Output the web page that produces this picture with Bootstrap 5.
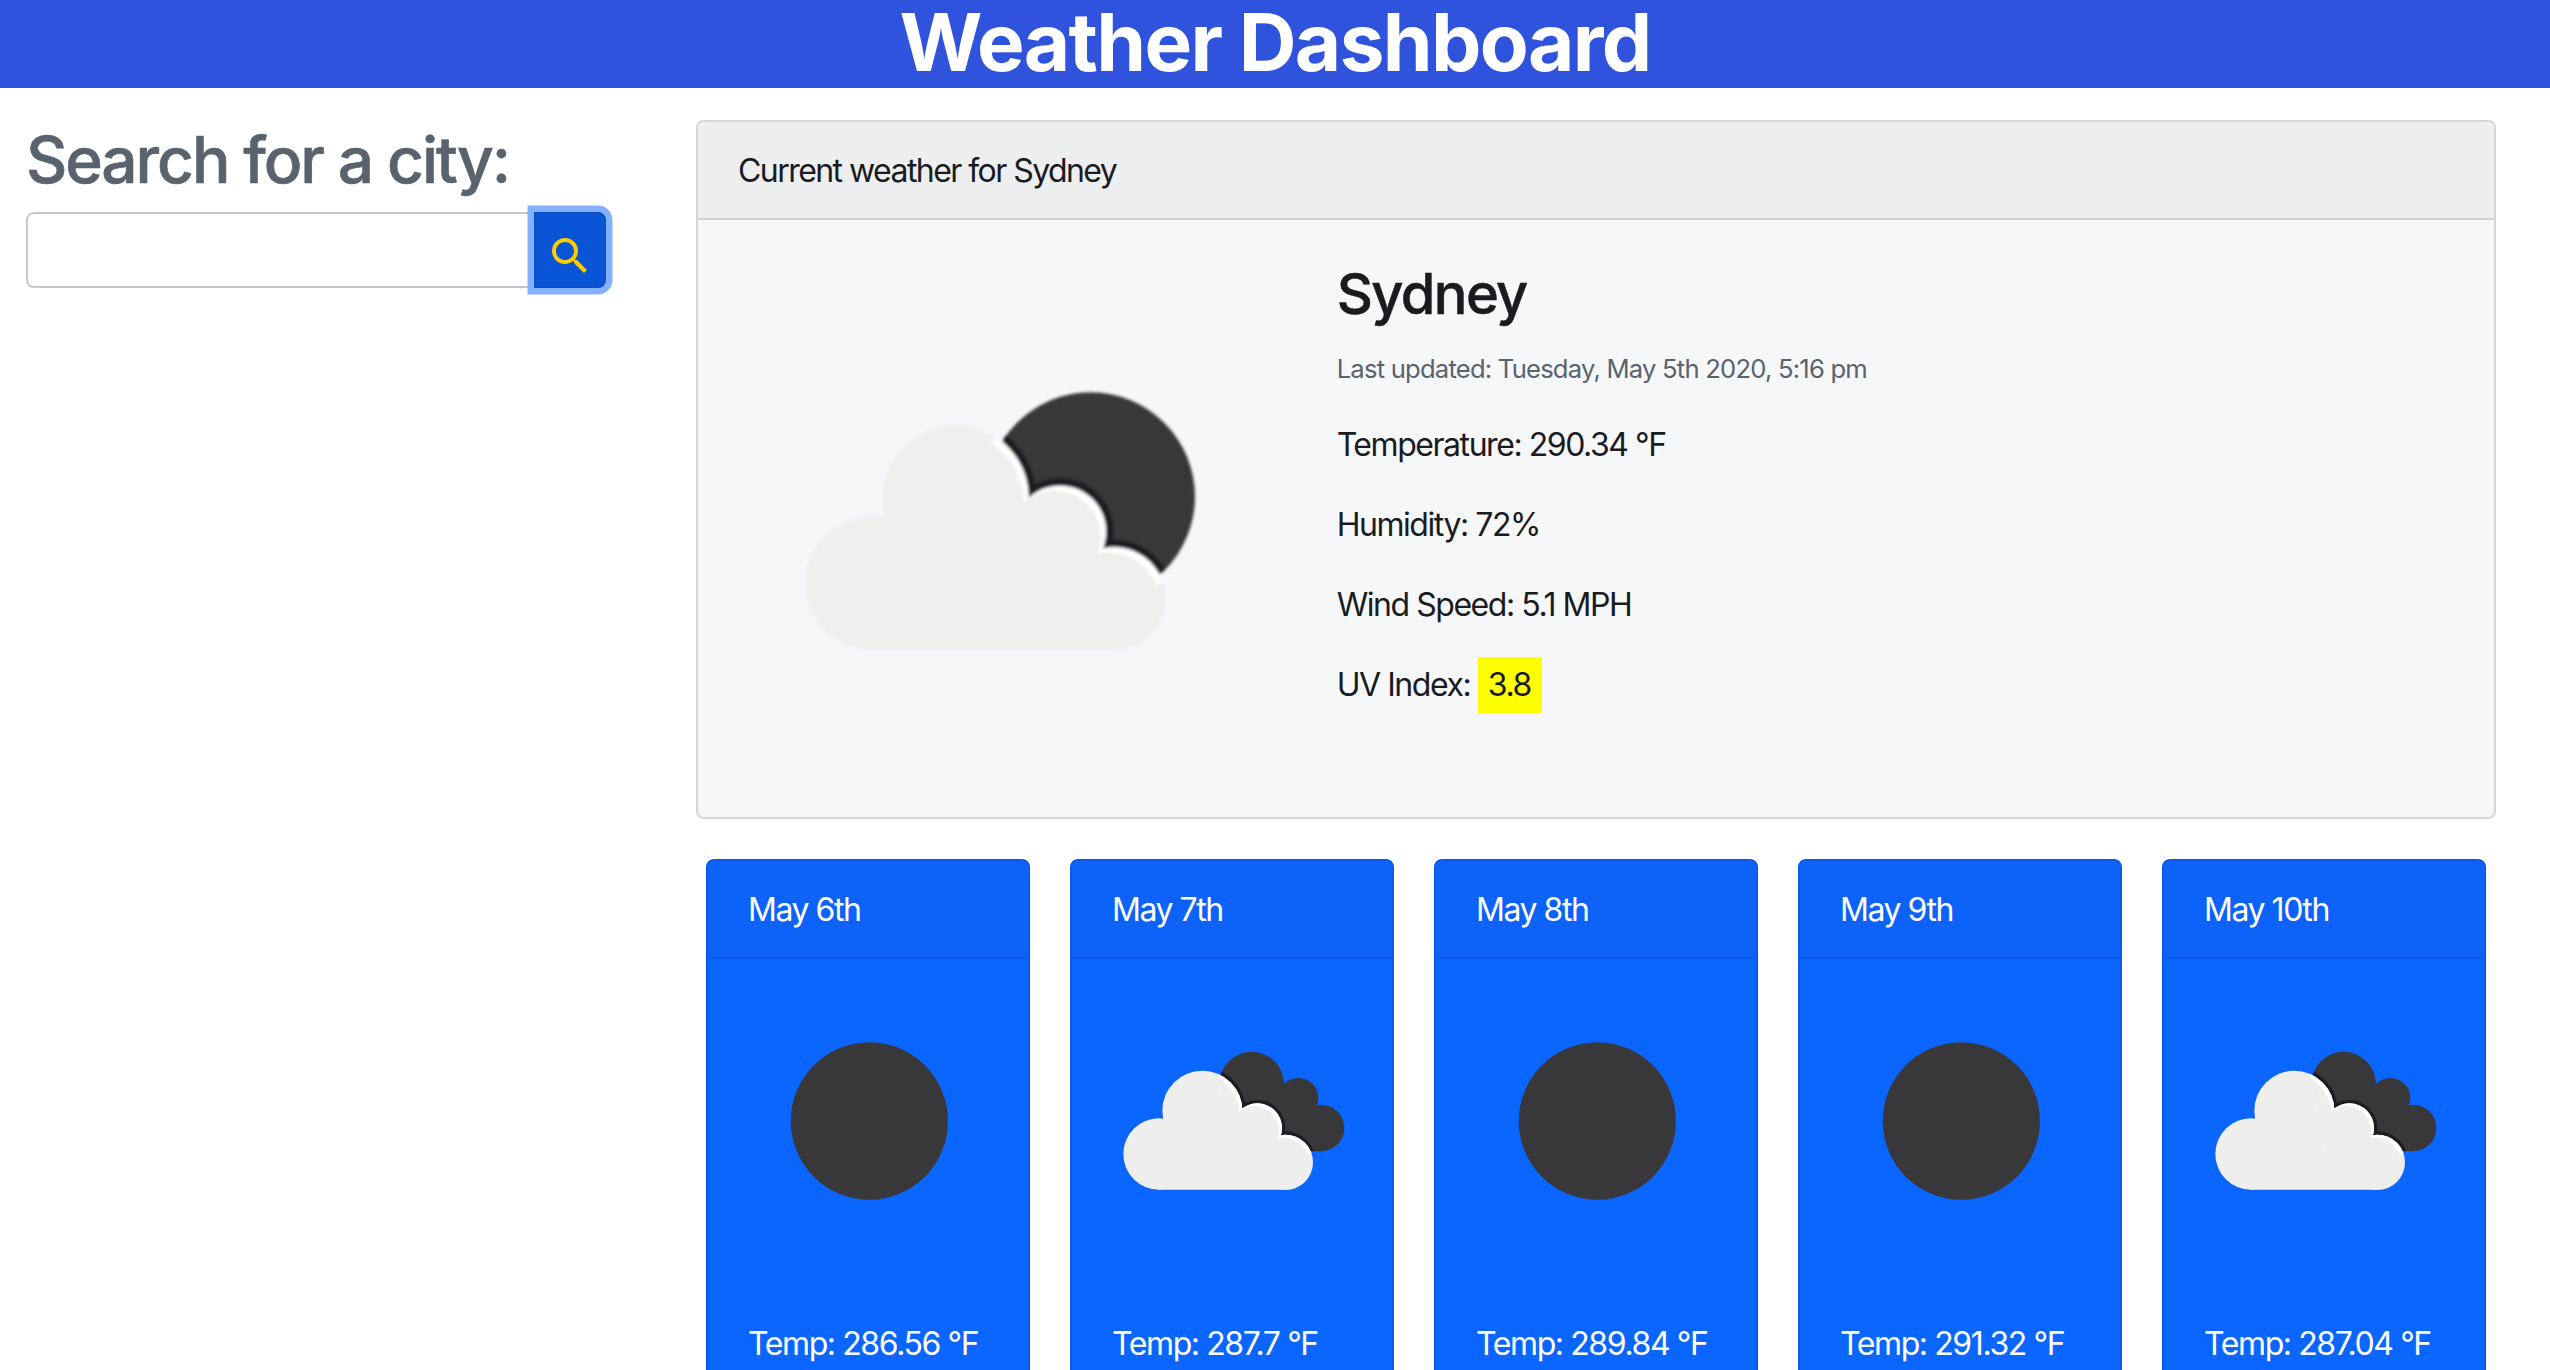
<!DOCTYPE html>
<html lang="en">
<head>
<meta charset="utf-8">
<meta name="viewport" content="width=device-width, initial-scale=1">
<title>Weather Dashboard</title>
<link href="https://cdn.jsdelivr.net/npm/bootstrap@5.3.0/dist/css/bootstrap.min.css" rel="stylesheet">
<style>
  html { font-size: 32px; }
  body { font-family: Inter, "Liberation Sans", sans-serif; color: #191b1e; line-height: 1.5; letter-spacing: -1.45px; }
  .shell { height: 1370px; overflow: hidden; }
  .page-head { background: #3053de; height: 88px; }
  .page-head h1 { font-size: 80px; font-weight: 700; line-height: 84px; letter-spacing: -1.65px; }
  .side { width: 696px; padding: 33px 90px 0 26px; }
  .side h2 { font-size: 64px; line-height: 77px; font-weight: 500; color: #59636d; letter-spacing: -2.1px; margin-bottom: 14px; -webkit-text-stroke: .6px #59636d; }
  .side .form-control { height: 76px; border: 2px solid #c3c8d3; border-radius: 8px; }
  .side .btn { width: 72px; height: 76px; padding: 12px 0 0; background: #0a54d6; border: 2px solid #0a4fc9; border-radius: 8px; box-shadow: 0 0 0 6.5px #84b1ff; z-index: 5; line-height: 1; }
  .main { width: 1800px; padding-top: 32px; }
  .card { border: 2px solid #d5d6d8; border-radius: 8px; }
  .card-header { height: 98px; padding: 25px 40px 23px; border-bottom: 2px solid #cfd0d2; background: #edeef0; line-height: 48px; }
  .now { background: #f6f7f9; height: 699px; }
  .now .card-header { letter-spacing: -1.55px; }
  .now .card-body { padding: 41px 40px; }
  .now h3 { font-size: 56px; font-weight: 500; line-height: 67px; margin-bottom: 22px; letter-spacing: -1.6px; -webkit-text-stroke: .5px #191b1e; }
  .now p { margin-bottom: 32px; line-height: 48px; }
  .now .updated { font-size: 25.6px; line-height: 38px; color: #59636d; letter-spacing: -.78px; margin-bottom: 33px; }
  .uv { background: #ff0; padding: 8px 11px 9px 10px; }
  .days { padding: 40px 10px 0; gap: 40px; }
  .day { width: 324px; height: 620px; background: #0b65ff; border-color: #0a5ae6; color: #fff; }
  .day .card-header { background: #0d62f9; border-color: #0a58e0; }
  .day .card-body { padding: 40px; letter-spacing: -1.4px; }
  .day svg { width: 240px; height: 240px; margin-bottom: 81px; }
</style>
</head>
<body>
<svg width="0" height="0" class="position-absolute" aria-hidden="true">
  <defs>
    <g id="front">
      <circle cx="177" cy="375" r="107"/><circle cx="307" cy="245" r="120"/><circle cx="472" cy="297" r="74"/><circle cx="556" cy="400" r="83"/>
      <path d="M177 300L307 245 472 297 556 400V482H177Z"/>
    </g>
    <clipPath id="frontClip">
      <circle cx="177" cy="375" r="107"/><circle cx="307" cy="245" r="120"/><circle cx="472" cy="297" r="74"/><circle cx="556" cy="400" r="83"/>
      <path d="M177 300L307 245 472 297 556 400V482H177Z"/>
    </clipPath>
    <clipPath id="backClip">
      <circle cx="455" cy="165" r="97"/><circle cx="595" cy="207" r="60"/><circle cx="663" cy="297" r="70"/>
      <path d="M455 165L595 207 663 297V367H455Z"/>
    </clipPath>
    <clipPath id="glowClip"><path d="M350 120L700 120V375H400Z"/></clipPath>
    <filter id="softSmall" x="-5%" y="-5%" width="110%" height="110%"><feGaussianBlur stdDeviation="1.8"/></filter>
    <symbol id="clouds" viewBox="36 -90 720 720">
      <g filter="url(#softSmall)">
      <g fill="#39393b"><circle cx="455" cy="165" r="97"/><circle cx="595" cy="207" r="60"/><circle cx="663" cy="297" r="70"/><path d="M455 165L595 207 663 297V367H455Z"/></g>
      <g clip-path="url(#backClip)"><use href="#front" fill="#1e1e20" stroke="#1e1e20" stroke-width="20"/></g>
      <use href="#front" fill="#eeeeec"/>
      <g clip-path="url(#glowClip)"><use href="#front" fill="#fff"/><g clip-path="url(#frontClip)"><use href="#front" fill="#eeeeec" transform="translate(-9 9)"/></g></g>
      </g>
    </symbol>
    <symbol id="moon" viewBox="36 -90 720 720"><circle cx="400" cy="276" r="236" fill="#39393b" filter="url(#softSmall)"/></symbol>

    <g id="big">
      <circle cx="277" cy="640" r="201"/><circle cx="527" cy="384" r="219"/><circle cx="840" cy="485" r="138"/><circle cx="1002" cy="687" r="155"/>
      <path d="M277 500L527 382 840 485 1002 687V841H277Z"/>
    </g>
    <clipPath id="bigClip">
      <circle cx="277" cy="640" r="201"/><circle cx="527" cy="384" r="219"/><circle cx="840" cy="485" r="138"/><circle cx="1002" cy="687" r="155"/>
      <path d="M277 500L527 382 840 485 1002 687V841H277Z"/>
    </clipPath>
    <clipPath id="discClip"><circle cx="930" cy="380" r="312"/></clipPath>
    <clipPath id="discGlow"><circle cx="930" cy="380" r="335"/></clipPath>
    <filter id="soft" x="-5%" y="-5%" width="110%" height="110%"><feGaussianBlur stdDeviation="5"/></filter>
    <symbol id="cloudMoon" viewBox="-246 -450 1796 1796">
      <g filter="url(#soft)">
        <circle cx="932" cy="380" r="313" fill="#39393b"/>
        <g clip-path="url(#discClip)"><use href="#big" fill="#1e1e20" stroke="#1e1e20" stroke-width="46"/></g>
        <use href="#big" fill="#efefed"/>
        <g clip-path="url(#discGlow)"><use href="#big" fill="#fff"/><g clip-path="url(#bigClip)"><use href="#big" fill="#efefed" transform="translate(-16 16)"/></g></g>
      </g>
    </symbol>
  </defs>
</svg>

<div class="shell">
<header class="page-head text-center text-white"><h1 class="m-0">Weather Dashboard</h1></header>

<div class="d-flex">
  <aside class="side flex-shrink-0">
    <h2>Search for a city:</h2>
    <div class="input-group flex-nowrap">
      <input type="text" class="form-control" aria-label="City">
      <button class="btn btn-primary flex-shrink-0 ms-0" type="button" aria-label="Search">
        <svg width="48" height="48" viewBox="0 0 24 24" fill="#ffcc00"><path d="M15.5 14h-.79l-.28-.27A6.471 6.471 0 0 0 16 9.5 6.5 6.5 0 1 0 9.5 16c1.61 0 3.09-.59 4.23-1.57l.27.28v.79l5 4.99L20.49 19l-4.99-5zm-6 0C7.01 14 5 11.99 5 9.5S7.01 5 9.5 5 14 7.01 14 9.5 11.99 14 9.5 14z"/></svg>
      </button>
    </div>
  </aside>

  <main class="main flex-shrink-0">
    <section class="card now">
      <div class="card-header">Current weather for Sydney</div>
      <div class="row g-0">
        <div class="col-4"><svg class="d-block w-100" viewBox="0 0 598 598"><use href="#cloudMoon" width="598" height="598"/></svg></div>
        <div class="col-8">
          <div class="card-body">
            <h3>Sydney</h3>
            <p class="updated">Last updated: Tuesday, May 5th 2020, 5:16 pm</p>
            <p>Temperature: 290.34 °F</p>
            <p>Humidity: 72%</p>
            <p>Wind Speed: 5.1 MPH</p>
            <p>UV Index: <span class="uv">3.8</span></p>
          </div>
        </div>
      </div>
    </section>

    <section class="days d-flex">
      <div class="card day"><div class="card-header">May 6th</div><div class="card-body"><svg class="d-block"><use href="#moon"/></svg><p class="text-nowrap m-0">Temp: 286.56 °F</p></div></div>
      <div class="card day"><div class="card-header">May 7th</div><div class="card-body"><svg class="d-block"><use href="#clouds"/></svg><p class="text-nowrap m-0">Temp: 287.7 °F</p></div></div>
      <div class="card day"><div class="card-header">May 8th</div><div class="card-body"><svg class="d-block"><use href="#moon"/></svg><p class="text-nowrap m-0">Temp: 289.84 °F</p></div></div>
      <div class="card day"><div class="card-header">May 9th</div><div class="card-body"><svg class="d-block"><use href="#moon"/></svg><p class="text-nowrap m-0">Temp: 291.32 °F</p></div></div>
      <div class="card day"><div class="card-header">May 10th</div><div class="card-body"><svg class="d-block"><use href="#clouds"/></svg><p class="text-nowrap m-0">Temp: 287.04 °F</p></div></div>
    </section>
  </main>
</div>
</div>
<script src="https://cdn.jsdelivr.net/npm/bootstrap@5.3.0/dist/js/bootstrap.bundle.min.js"></script>
</body>
</html>
